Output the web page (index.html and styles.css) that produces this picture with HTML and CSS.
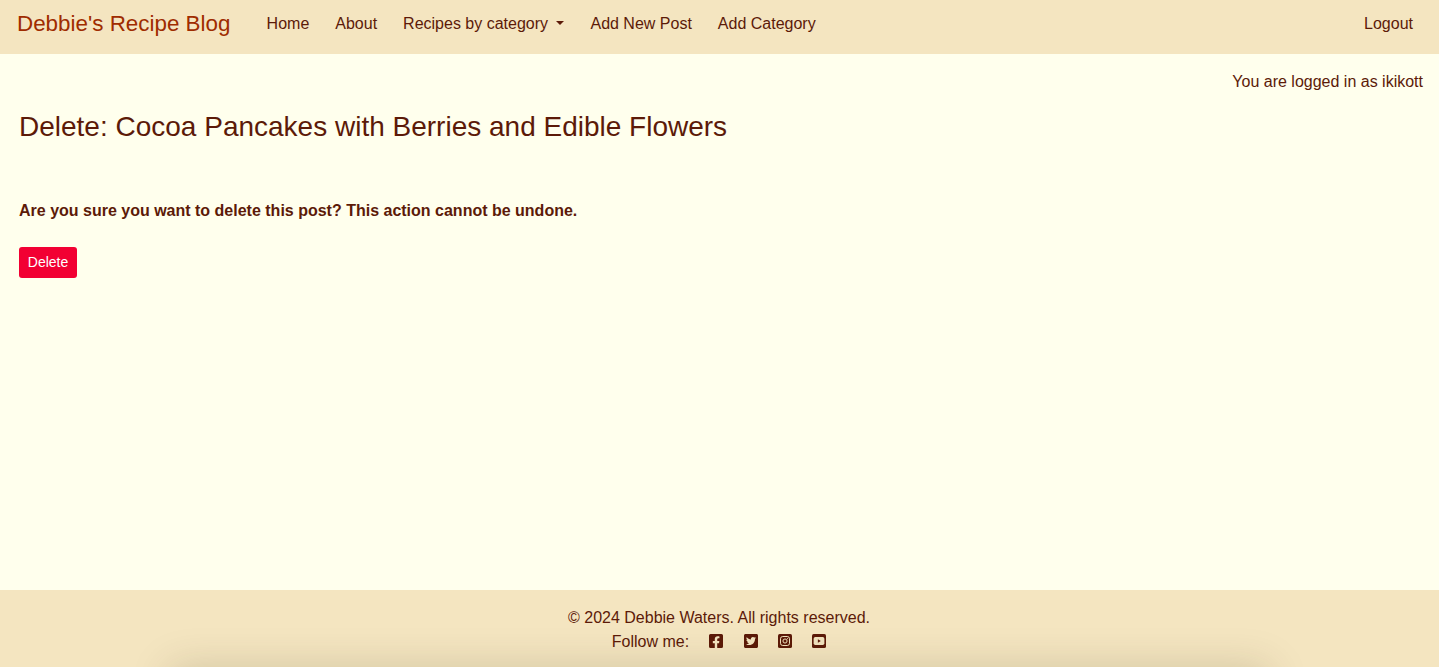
FILE: index.html
```
<!DOCTYPE html>
<html lang="en">
<head>
<meta charset="utf-8">
<title>Debbie's Recipe Blog</title>
<link rel="stylesheet" href="styles.css">
</head>
<body>
<nav class="navbar">
  <a class="brand">Debbie's Recipe Blog</a>
  <div class="nav-links">
    <a>Home</a>
    <a>About</a>
    <a class="dropdown">Recipes by category</a>
    <a>Add New Post</a>
    <a>Add Category</a>
  </div>
  <a class="logout">Logout</a>
</nav>
<p class="user-status">You are logged in as ikikott</p>
<main class="content">
  <h1 class="title">Delete: Cocoa Pancakes with Berries and Edible Flowers</h1>
  <p class="warning">Are you sure you want to delete this post? This action cannot be undone.</p>
  <button class="delete-button" type="button">Delete</button>
</main>
<footer class="footer">
  <p class="copyright">© 2024 Debbie Waters. All rights reserved.</p>
  <div class="social">
    <span class="follow">Follow me:</span>
    <svg class="icon" viewBox="0 32 448 448"><path d="M400 32H48A48 48 0 0 0 0 80v352a48 48 0 0 0 48 48h137.25V327.69h-63V256h63v-54.64c0-62.15 37-96.48 93.67-96.48 27.14 0 55.52 4.84 55.52 4.84v61h-31.27c-30.81 0-40.42 19.12-40.42 38.73V256h68.78l-11 71.69h-57.78V480H400a48 48 0 0 0 48-48V80a48 48 0 0 0-48-48z"/></svg>
    <svg class="icon" viewBox="0 32 448 448"><path d="M400 32H48C21.5 32 0 53.5 0 80v352c0 26.5 21.5 48 48 48h352c26.5 0 48-21.5 48-48V80c0-26.5-21.5-48-48-48zm-48.9 158.8c.2 2.8.2 5.7.2 8.5 0 86.7-66 186.6-186.6 186.6-37.2 0-71.7-10.8-100.7-29.4 5.3.6 10.4.8 15.8.8 30.7 0 58.9-10.4 81.4-28-28.8-.6-53-19.5-61.3-45.5 10.1 1.5 19.2 1.5 29.6-1.2-30-6.1-52.5-32.5-52.5-64.4v-.8c8.7 4.9 18.9 7.9 29.6 8.3a65.447 65.447 0 0 1-29.2-54.6c0-12.2 3.2-23.4 8.9-33.1 32.3 39.8 80.8 65.8 135.2 68.6-9.3-44.5 24-80.6 64-80.6 18.9 0 35.9 7.9 47.9 20.7 14.8-2.8 29-8.3 41.6-15.8-4.9 15.2-15.2 28-28.8 36.1 13.2-1.4 26-5.1 37.8-10.2-8.9 13.1-20.1 24.7-32.9 34z"/></svg>
    <svg class="icon" viewBox="0 0 448 448"><rect width="448" height="448" rx="52"/><g class="cutout"><rect x="80" y="80" width="288" height="288" rx="72"/><circle cx="224" cy="224" r="66"/></g><circle class="lens" cx="301" cy="147" r="18"/></svg>
    <svg class="icon" viewBox="0 0 448 448"><rect width="448" height="448" rx="52"/><rect class="screen" x="52" y="98" width="344" height="252" rx="54"/><path d="M187 170v108l95-54z"/></svg>
  </div>
  <div class="dock-shadow"></div>
</footer>
</body>
</html>
```
FILE: styles.css
```
* { box-sizing: border-box; }

body {
  margin: 0;
  height: 667px;
  display: flex;
  flex-direction: column;
  background: #ffffed;
  color: #5c1a08;
  font: 16px/24px "Liberation Sans", Arial, sans-serif;
}

p, h1 { margin: 0; }

.navbar {
  display: flex;
  flex: none;
  height: 54px;
  padding: 12px 26px 0 17px;
  background: #f4e5c0;
}

.brand {
  width: 249.6px;
  font-size: 22.4px;
  color: #9f2c00;
}

.nav-links { display: flex; gap: 26px; }

.dropdown::after {
  content: "";
  display: inline-block;
  margin-left: 8.4px;
  vertical-align: 4px;
  border: 4px solid transparent;
  border-top-color: currentColor;
  border-bottom: 0;
}

.logout { margin-left: auto; }

.user-status {
  padding: 16px 16px 0 0;
  text-align: right;
}

.content { flex: 1; padding: 15px 19px; }

.title {
  font-size: 28px;
  line-height: 35px;
  font-weight: 400;
}

.warning { margin-top: 55px; font-weight: 700; }

.delete-button {
  display: block;
  width: 58px;
  height: 31px;
  margin-top: 24px;
  padding: 0;
  border: 0;
  border-radius: 3px;
  background: #f20033;
  color: #fff;
  font: 14px/21px "Liberation Sans", Arial, sans-serif;
}

.footer {
  position: relative;
  overflow: hidden;
  flex: none;
  height: 77px;
  padding: 16px 1px 0 0;
  background: #f4e5c0;
  text-align: center;
}

.social {
  display: flex;
  justify-content: center;
  align-items: center;
  gap: 20.3px;
}

.icon {
  width: 14px;
  height: 14px;
  margin-bottom: 2px;
  fill: currentColor;
}

.cutout { fill: none; stroke: #f1e2bd; stroke-width: 32; }
.lens, .screen { fill: #f1e2bd; }

/* Soft shade rising from the bottom edge of the window */
.dock-shadow {
  position: absolute;
  top: 77px;
  left: 170px;
  width: 1099px;
  height: 80px;
  box-shadow: 0 0 40px rgba(60, 50, 20, .18);
}
```
